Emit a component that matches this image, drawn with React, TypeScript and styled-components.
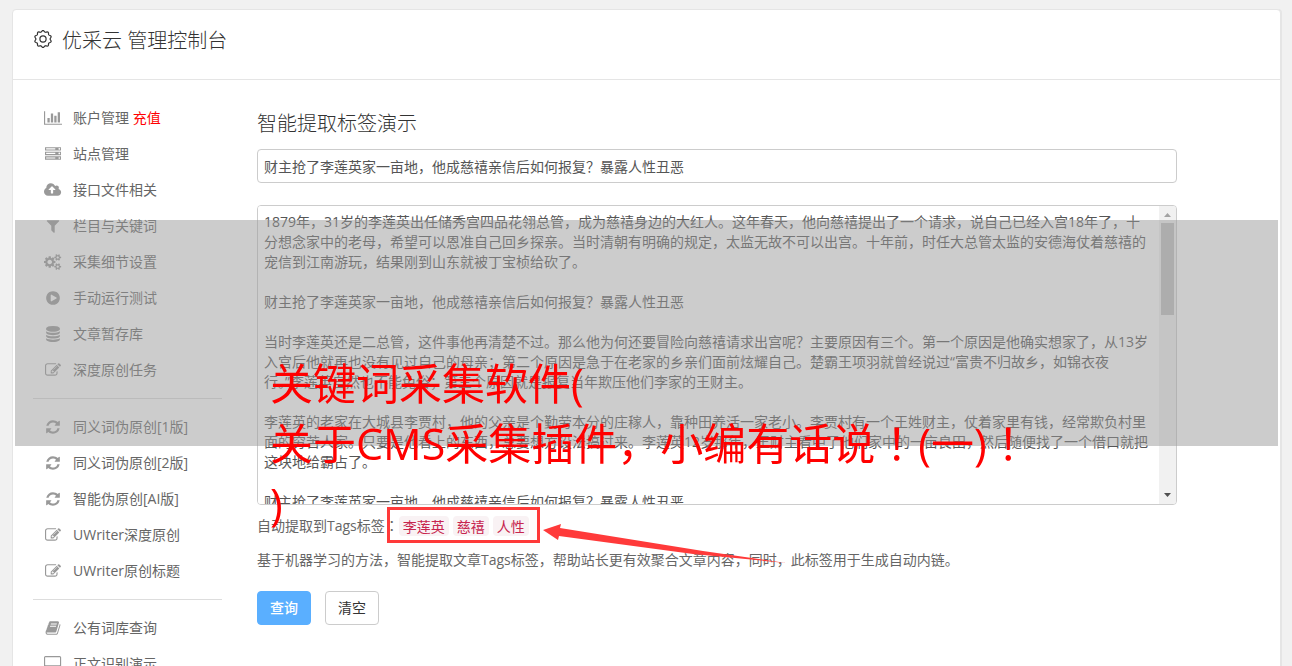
import React from 'react';
import styled, { createGlobalStyle } from 'styled-components';

const GlobalStyle = createGlobalStyle`
  *, *::before, *::after { box-sizing: border-box; }
  body {
    margin: 0;
    background: #f1f1f1;
    color: #666;
    font: 14px/20px "Open Sans", "Noto Sans CJK SC", sans-serif;
  }
  button, input, textarea { font: inherit; color: inherit; }
`;

const Page = styled.div`
  position: relative;
  height: 100vh;
  overflow: hidden;
  padding: 9px 11px 0 12px;
`;

const Card = styled.div`
  min-height: 100vh;
  background: #fff;
  border: 1px solid #e5e5e5;
  border-radius: 4px;
  box-shadow: 1px 0 0 #e5e5e5;
`;

const Header = styled.header`
  display: flex;
  align-items: center;
  gap: 9px;
  height: 70px;
  padding: 0 20px 8px;
  border-bottom: 1px solid #e5e5e5;
  color: #333;

  svg { margin-bottom: 4px; }
`;

const Title = styled.h1`
  margin: 0;
  font-size: 20px;
  line-height: 28px;
  font-weight: 300;
`;

const Body = styled.div`
  display: flex;
  gap: 35px;
  padding: 20px;
`;

const Sidebar = styled.nav`
  flex: 0 0 189px;
`;

const Menu = styled.ul`
  list-style: none;
  margin: 0;
  padding: 0;

  & + & {
    margin-top: 10px;
    padding-top: 10px;
    border-top: 1px solid #ddd;
  }
`;

const MenuLink = styled.a`
  display: flex;
  align-items: center;
  gap: 10px;
  height: 36px;
  padding-left: 10px;
  color: #666;
  text-decoration: none;
  white-space: pre;
`;

const IconBox = styled.span`
  display: flex;
  justify-content: center;
  flex: 0 0 20px;
  color: #999;
`;

const Recharge = styled.span`
  color: #f00;
`;

const Main = styled.main`
  flex: 1;
  min-width: 0;
  max-width: 920px;
`;

const Heading = styled.h2`
  margin: 10px 0 11px;
  font-size: 20px;
  line-height: 28px;
  font-weight: 300;
  color: #333;
`;

const TitleInput = styled.input`
  display: block;
  width: 100%;
  height: 34px;
  padding: 0 6px;
  border: 1px solid #ccc;
  border-radius: 4px;
  background: #fff;
  color: #555;
  outline: none;
`;

const ArticleBox = styled.div`
  display: flex;
  height: 300px;
  margin: 22px 0 10px;
  border: 1px solid #ccc;
  border-radius: 4px;
  overflow: hidden;
`;

const Article = styled.textarea`
  flex: 1;
  min-width: 0;
  padding: 6px 11px 6px 6px;
  border: 0;
  background: #fff;
  color: #555;
  line-height: 20px;
  resize: none;
  outline: none;
  scrollbar-width: none;
`;

const Scrollbar = styled.div`
  display: flex;
  flex-direction: column;
  align-items: center;
  justify-content: space-between;
  flex: 0 0 17px;
  background: #f1f1f1;
`;

const Thumb = styled.div`
  width: 13px;
  height: 92px;
  margin-bottom: auto;
  background: #c1c1c1;
`;

const Note = styled.p`
  margin: 13px 0 21px;
`;

const TagRow = styled.div`
  display: flex;
  align-items: center;
  height: 22px;
`;

const TagGroup = styled.div`
  position: relative;
  display: flex;
  gap: 4px;
`;

const Tag = styled.code`
  padding: 0 4px;
  border-radius: 4px;
  background: #f9f2f4;
  color: #c7254e;
  font: 14px/20px "Noto Sans CJK SC", sans-serif;
`;

const Frame = styled.span`
  position: absolute;
  inset: -9px -11px -7px -12px;
  border: 3px solid #ff3a3a;
`;

const Arrow = styled.svg`
  position: absolute;
  left: 100%;
  top: 8px;
  margin-left: 14px;
`;

const Actions = styled.div`
  display: flex;
  gap: 14px;
`;

const Button = styled.button<{ $primary?: boolean }>`
  width: 54px;
  height: 34px;
  padding: 0;
  border: 1px solid ${p => (p.$primary ? '#5aafff' : '#ccc')};
  border-radius: 4px;
  background: ${p => (p.$primary ? '#5aafff' : '#fff')};
  color: ${p => (p.$primary ? '#fff' : '#333')};
  font-weight: ${p => (p.$primary ? 500 : 400)};
`;

const Banner = styled.div`
  position: absolute;
  top: 220px;
  left: 15px;
  right: 14px;
  height: 226px;
  padding: 134px 0 0 255px;
  background: rgba(153, 153, 153, 0.5);
  color: #f00;
  font-size: 43px;
  line-height: 60px;
  pointer-events: none;
`;

const BannerLine = styled.div`
  white-space: nowrap;
`;

// The Japanese face centres these punctuation marks in the full-width cell.
const CentredMark = styled.span`
  font-family: "Noto Sans CJK JP", sans-serif;
  line-height: 1;
`;

const glyphs = {
  chart: { box: '0 0 2048 1792', d: 'M640 896v512h-256v-512h256zm384-512v1024h-256v-1024h256zm1024 1152v128h-2048v-1536h128v1408h1920zm-640-896v768h-256v-768h256zm384-384v1152h-256v-1152h256z' },
  server: { box: '0 0 1792 1792', d: 'M128 1408h1024v-128h-1024v128zm0-512h1024v-128h-1024v128zm1568 448q0-40-28-68t-68-28-68 28-28 68 28 68 68 28 68-28 28-68zm-1568-960h1024v-128h-1024v128zm1568 448q0-40-28-68t-68-28-68 28-28 68 28 68 68 28 68-28 28-68zm0-512q0-40-28-68t-68-28-68 28-28 68 28 68 68 28 68-28 28-68zm96 832v384h-1792v-384h1792zm0-512v384h-1792v-384h1792zm0-512v384h-1792v-384h1792z' },
  cloud: { box: '-64 0 1920 1792', d: 'M1216 864q0-14-9-23l-352-352q-9-9-23-9t-23 9l-351 351q-10 12-10 24 0 14 9 23t23 9h224v352q0 13 9.5 22.5t22.5 9.5h192q13 0 22.5-9.5t9.5-22.5v-352h224q13 0 22.5-9.5t9.5-22.5zm640 288q0 159-112.5 271.5t-271.5 112.5h-1088q-185 0-316.5-131.5t-131.5-316.5q0-130 70-240t188-165q-2-30-2-43 0-212 150-362t362-150q156 0 285.5 87t188.5 231q71-62 166-62 106 0 181 75t75 181q0 76-41 138 130 31 213.5 135.5t83.5 238.5z' },
  filter: { box: '0 0 1792 1792', d: 'M1595 295q17 41-14 70l-493 493v742q0 42-39 59-13 5-25 5-27 0-45-19l-256-256q-19-19-19-45v-486l-493-493q-31-29-14-70 17-39 59-39h1280q42 0 59 39z' },
  cogs: { box: '0 0 1920 1792', d: 'M896 896q0-106-75-181t-181-75-181 75-75 181 75 181 181 75 181-75 75-181zm768 512q0-52-38-90t-90-38-90 38-38 90q0 53 37.5 90.5t90.5 37.5 90.5-37.5 37.5-90.5zm0-1024q0-52-38-90t-90-38-90 38-38 90q0 53 37.5 90.5t90.5 37.5 90.5-37.5 37.5-90.5zm-384 421v185q0 10-7 19.5t-16 10.5l-155 24q-11 35-32 76 34 48 90 115 7 11 7 20 0 12-7 19-23 30-82.5 89.5t-78.5 59.5q-11 0-21-7l-115-90q-37 19-77 31-11 108-23 155-7 24-30 24h-186q-11 0-20-7.5t-10-17.5l-23-153q-34-10-75-31l-118 89q-7 7-20 7-11 0-21-8-144-133-144-160 0-9 7-19 10-14 41-53t47-61q-23-44-35-82l-152-24q-10-1-17-9.5t-7-19.5v-185q0-10 7-19.5t16-10.5l155-24q11-35 32-76-34-48-90-115-7-11-7-20 0-12 7-20 22-30 82-89t79-59q11 0 21 7l115 90q34-18 77-32 11-108 23-154 7-24 30-24h186q11 0 20 7.5t10 17.5l23 153q34 10 75 31l118-89q8-7 20-7 11 0 21 8 144 133 144 160 0 8-7 19-12 16-42 54t-45 60q23 48 34 82l152 23q10 2 17 10.5t7 19.5zm640 533v140q0 16-149 31-12 27-30 52 51 113 51 138 0 4-4 7-122 71-124 71-8 0-46-47t-52-68q-20 2-30 2t-30-2q-14 21-52 68t-46 47q-2 0-124-71-4-3-4-7 0-25 51-138-18-25-30-52-149-15-149-31v-140q0-16 149-31 13-29 30-52-51-113-51-138 0-4 4-7 4-2 35-20t59-34 30-16q8 0 46 46.5t52 67.5q20-2 30-2t30 2q51-71 92-112l6-2q4 0 124 70 4 3 4 7 0 25-51 138 17 23 30 52 149 15 149 31zm0-1024v140q0 16-149 31-12 27-30 52 51 113 51 138 0 4-4 7-122 71-124 71-8 0-46-47t-52-68q-20 2-30 2t-30-2q-14 21-52 68t-46 47q-2 0-124-71-4-3-4-7 0-25 51-138-18-25-30-52-149-15-149-31v-140q0-16 149-31 13-29 30-52-51-113-51-138 0-4 4-7 4-2 35-20t59-34 30-16q8 0 46 46.5t52 67.5q20-2 30-2t30 2q51-71 92-112l6-2q4 0 124 70 4 3 4 7 0 25-51 138 17 23 30 52 149 15 149 31z' },
  play: { box: '0 0 1792 1792', d: 'M896 128q209 0 385.5 103t279.5 279.5 103 385.5-103 385.5-279.5 279.5-385.5 103-385.5-103-279.5-279.5-103-385.5 103-385.5 279.5-279.5 385.5-103zm384 823q32-18 32-55t-32-55l-544-320q-31-19-64-1-32 19-32 56v640q0 37 32 56 16 8 32 8 17 0 32-9z' },
  database: { box: '0 0 1792 1792', d: 'M896 768q237 0 443-43t325-127v170q0 69-103 128t-280 93.5-385 34.5-385-34.5-280-93.5-103-128v-170q119 84 325 127t443 43zm0 768q237 0 443-43t325-127v170q0 69-103 128t-280 93.5-385 34.5-385-34.5-280-93.5-103-128v-170q119 84 325 127t443 43zm0-384q237 0 443-43t325-127v170q0 69-103 128t-280 93.5-385 34.5-385-34.5-280-93.5-103-128v-170q119 84 325 127t443 43zm0-1152q208 0 385 34.5t280 93.5 103 128v128q0 69-103 128t-280 93.5-385 34.5-385-34.5-280-93.5-103-128v-128q0-69 103-128t280-93.5 385-34.5z' },
  edit: { box: '0 0 1792 1792', d: 'M888 1184l116-116-152-152-116 116v56h96v96h56zm440-720q-16-16-33 1l-350 350q-17 17-1 33t33-1l350-350q17-17 1-33zm80 594v190q0 119-84.5 203.5t-203.5 84.5h-832q-119 0-203.5-84.5t-84.5-203.5v-832q0-119 84.5-203.5t203.5-84.5h832q63 0 117 25 15 7 18 23 3 17-9 29l-49 49q-14 14-32 8-23-6-45-6h-832q-66 0-113 47t-47 113v832q0 66 47 113t113 47h832q66 0 113-47t47-113v-126q0-13 9-22l64-64q15-15 35-7t20 29zm-96-738l288 288-672 672h-288v-288zm444 132l-92 92-288-288 92-92q28-28 68-28t68 28l152 152q28 28 28 68t-28 68z' },
  refresh: { box: '0 0 1792 1792', d: 'M1639 1056q0 5-1 7-64 268-268 434.5t-478 166.5q-146 0-282.5-55t-243.5-157l-129 129q-19 19-45 19t-45-19-19-45v-448q0-26 19-45t45-19h448q26 0 45 19t19 45-19 45l-137 137q71 66 161 102t187 36q134 0 250-65t186-179q11-17 53-117 8-23 30-23h192q13 0 22.5 9.5t9.5 22.5zm25-800v448q0 26-19 45t-45 19h-448q-26 0-45-19t-19-45 19-45l138-138q-148-137-349-137-134 0-250 65t-186 179q-11 17-53 117-8 23-30 23h-199q-13 0-22.5-9.5t-9.5-22.5v-7q65-268 270-434.5t480-166.5q146 0 284 55.5t245 156.5l130-129q19-19 45-19t45 19 19 45z' },
  book: { box: '0 0 1792 1792', d: 'M1703 478q40 57 18 129l-275 906q-19 64-76.5 107.5t-122.5 43.5h-923q-77 0-148.5-53.5t-99.5-131.5q-24-67-2-127 0-4 3-27t4-37q1-8-3-21.5t-3-19.5q2-11 8-21t16.5-23.5 16.5-23.5q23-38 45-91.5t30-91.5q3-10 .5-30t-.5-28q3-11 17-28t17-23q21-36 42-92t25-90q1-9-2.5-32t.5-28q4-13 22-30.5t22-22.5q19-26 42.5-84.5t27.5-96.5q1-8-3-25.5t-2-26.5q2-8 9-18t18-23 17-21q8-12 16.5-30.5t15-35 16-36 19.5-32 26.5-23.5 36-11.5 47.5 5.5l-1 3q38-9 51-9h761q74 0 114 56t18 130l-274 906q-36 119-71.5 153.5t-128.5 34.5h-869q-27 0-38 15-11 16-1 43 24 70 144 70h923q29 0 56-15.5t35-41.5l300-987q7-22 5-57 38 15 59 43zm-1064 2q-4 13 2 22.5t20 9.5h608q13 0 25.5-9.5t16.5-22.5l21-64q4-13-2-22.5t-20-9.5h-608q-13 0-25.5 9.5t-16.5 22.5zm-83 256q-4 13 2 22.5t20 9.5h608q13 0 25.5-9.5t16.5-22.5l21-64q4-13-2-22.5t-20-9.5h-608q-13 0-25.5 9.5t-16.5 22.5z' },
  desktop: { box: '0 0 1920 1792', d: 'M1792 992v-832q0-13-9.5-22.5t-22.5-9.5h-1600q-13 0-22.5 9.5t-9.5 22.5v832q0 13 9.5 22.5t22.5 9.5h1600q13 0 22.5-9.5t9.5-22.5zm128-832v1088q0 66-47 113t-113 47h-544q0 37 16 77.5t32 71 16 43.5q0 26-19 45t-45 19h-512q-26 0-45-19t-19-45q0-14 16-44t32-70 16-78h-544q-66 0-113-47t-47-113v-1088q0-66 47-113t113-47h1600q66 0 113 47t47 113z' },
};

type GlyphName = keyof typeof glyphs;

function Glyph({ name }: { name: GlyphName }) {
  const { box, d } = glyphs[name];
  return (
    <IconBox>
      <svg viewBox={box} height="16" fill="currentColor" aria-hidden="true">
        <path d={d} />
      </svg>
    </IconBox>
  );
}

// Outline of a gear with ten soft lobes around the centre of a 20 by 20 box.
const gearOutline =
  Array.from({ length: 120 }, (_, i) => {
    const a = (i / 120) * Math.PI * 2 - Math.PI / 2;
    const r = 7.8 + 0.7 * Math.cos(10 * (a + Math.PI / 2));
    return `${i ? 'L' : 'M'}${(10 + r * Math.cos(a)).toFixed(2)} ${(10 + r * Math.sin(a)).toFixed(2)}`;
  }).join('') + 'Z';

function GearIcon() {
  return (
    <svg width="20" height="20" viewBox="0 0 20 20" fill="none" stroke="currentColor" strokeWidth="1.2" strokeLinejoin="round" aria-hidden="true">
      <path d={gearOutline} />
      <circle cx="10" cy="10" r="3.1" />
    </svg>
  );
}

function ScrollArrow({ down }: { down?: boolean }) {
  return (
    <svg width="17" height="17" viewBox="0 0 17 17" aria-hidden="true">
      <path d={down ? 'M5 6h7l-3.5 4z' : 'M5 11h7l-3.5-4z'} fill={down ? '#505050' : '#a3a3a3'} />
    </svg>
  );
}

const menus: { icon: GlyphName; label: string; extra?: string }[][] = [
  [
    { icon: 'chart', label: '账户管理', extra: '充值' },
    { icon: 'server', label: '站点管理' },
    { icon: 'cloud', label: '接口文件相关' },
    { icon: 'filter', label: '栏目与关键词' },
    { icon: 'cogs', label: '采集细节设置' },
    { icon: 'play', label: '手动运行测试' },
    { icon: 'database', label: '文章暂存库' },
    { icon: 'edit', label: '深度原创任务' },
  ],
  [
    { icon: 'refresh', label: '同义词伪原创[1版]' },
    { icon: 'refresh', label: '同义词伪原创[2版]' },
    { icon: 'refresh', label: '智能伪原创[AI版]' },
    { icon: 'edit', label: 'UWriter深度原创' },
    { icon: 'edit', label: 'UWriter原创标题' },
  ],
  [
    { icon: 'book', label: '公有词库查询' },
    { icon: 'desktop', label: '正文识别演示' },
  ],
];

const headline = '财主抢了李莲英家一亩地，他成慈禧亲信后如何报复？暴露人性丑恶';

const article = [
  '1879年，31岁的李莲英出任储秀宫四品花翎总管，成为慈禧身边的大红人。这年春天，他向慈禧提出了一个请求，说自己已经入宫18年了，十分想念家中的老母，希望可以恩准自己回乡探亲。当时清朝有明确的规定，太监无故不可以出宫。十年前，时任大总管太监的安德海仗着慈禧的宠信到江南游玩，结果刚到山东就被丁宝桢给砍了。',
  headline,
  '当时李莲英还是二总管，这件事他再清楚不过。那么他为何还要冒险向慈禧请求出宫呢？主要原因有三个。第一个原因是他确实想家了，从13岁入宫后他就再也没有见过自己的母亲；第二个原因是急于在老家的乡亲们面前炫耀自己。楚霸王项羽就曾经说过“富贵不归故乡，如锦衣夜行。”李莲英自然也不能免俗；第三个原因就是报复当年欺压他们李家的王财主。',
  '李莲英的老家在大城县李贾村，他的父亲是个勤劳本分的庄稼人，靠种田养活一家老小。李贾村有一个王姓财主，仗着家里有钱，经常欺负村里面的穷苦人家。只要是他看上的东西，总要想方设法搞过来。李莲英12岁那年，王财主看中了他们家中的一亩良田，然后随便找了一个借口就把这块地给霸占了。',
  headline,
].join('\n\n') + '\n'.repeat(27);

export default function App() {
  return (
    <Page>
      <GlobalStyle />
      <Card>
        <Header>
          <GearIcon />
          <Title>优采云 管理控制台</Title>
        </Header>
        <Body>
          <Sidebar>
            {menus.map((items, i) => (
              <Menu key={i}>
                {items.map(item => (
                  <li key={item.label}>
                    <MenuLink href="#">
                      <Glyph name={item.icon} />
                      <span>
                        {item.label}
                        {item.extra && <Recharge> {item.extra}</Recharge>}
                      </span>
                    </MenuLink>
                  </li>
                ))}
              </Menu>
            ))}
          </Sidebar>
          <Main>
            <Heading>智能提取标签演示</Heading>
            <TitleInput aria-label="标题" defaultValue={headline} />
            <ArticleBox>
              <Article aria-label="正文" spellCheck={false} defaultValue={article} />
              <Scrollbar aria-hidden="true">
                <ScrollArrow />
                <Thumb />
                <ScrollArrow down />
              </Scrollbar>
            </ArticleBox>
            <TagRow>
              <span>
                自动提取到Tags标签<CentredMark>：</CentredMark>
              </span>
              <TagGroup>
                <Tag>李莲英</Tag>
                <Tag>慈禧</Tag>
                <Tag>人性</Tag>
                <Frame />
                <Arrow width="244" height="40" viewBox="0 0 244 40" fill="#ff3a3a" aria-hidden="true">
                  <path d="M0 6L18 0L17 4L160 27L243 39L150 30L16 12L15 16Z" />
                </Arrow>
              </TagGroup>
            </TagRow>
            <Note>基于机器学习的方法，智能提取文章Tags标签，帮助站长更有效聚合文章内容，同时，此标签用于生成自动内链。</Note>
            <Actions>
              <Button type="button" $primary>查询</Button>
              <Button type="button">清空</Button>
            </Actions>
          </Main>
        </Body>
      </Card>
      <Banner>
        <BannerLine>关键词采集软件(</BannerLine>
        <BannerLine>
          关于CMS采集插件，小编有话说<CentredMark>！</CentredMark>(一)<CentredMark>！</CentredMark>
        </BannerLine>
        <BannerLine>)</BannerLine>
      </Banner>
    </Page>
  );
}
